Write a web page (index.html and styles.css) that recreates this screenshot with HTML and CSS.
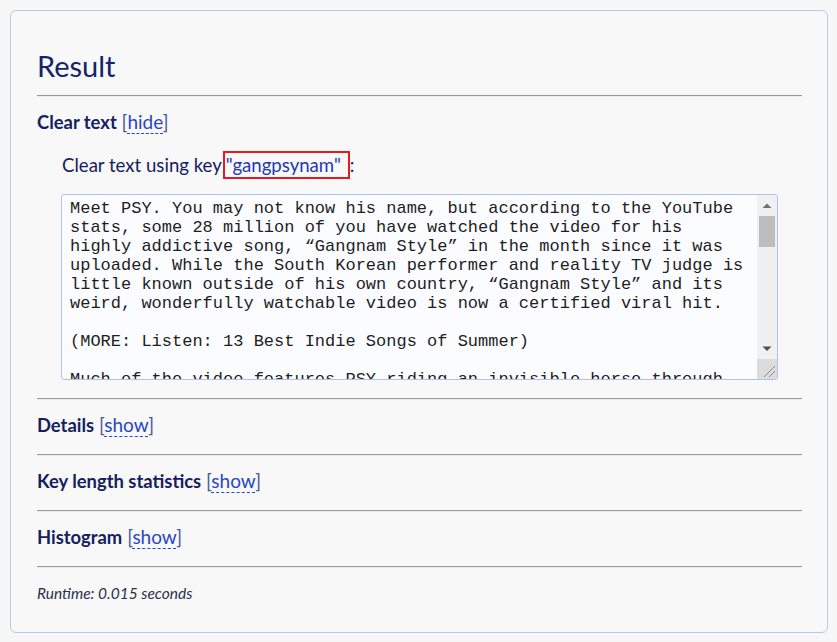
FILE: index.html
```html
<!DOCTYPE html>
<html lang="en">
<head>
<meta charset="utf-8">
<title>Result</title>
<link rel="stylesheet" href="styles.css">
</head>
<body>
<div class="panel">
  <h2 class="title">Result</h2>
  <hr class="rule">
  <div class="section">
    <div class="sec-head"><span class="sec-name">Clear text</span> <span class="toggle">[<a class="tlink">hide</a>]</span></div>
    <div class="sec-body">
      <p class="key-line">Clear text using key<span class="key">"gangpsynam"</span>:</p>
      <div class="ta-wrap">
        <textarea class="output" readonly>Meet PSY. You may not know his name, but according to the YouTube stats, some 28 million of you have watched the video for his highly addictive song, “Gangnam Style” in the month since it was uploaded. While the South Korean performer and reality TV judge is little known outside of his own country, “Gangnam Style” and its weird, wonderfully watchable video is now a certified viral hit.

(MORE: Listen: 13 Best Indie Songs of Summer)

Much of the video features PSY riding an invisible horse through the streets of Seoul, dancing in a sauna, on a tour bus and in a stable, while a parade of odd characters drifts in and out of the frame. The song’s title refers to Gangnam, an affluent district of Seoul known for its expensive boutiques, wealthy residents and fashionable nightlife.

PSY has said that the song pokes fun at people who try too hard to look like they belong in Gangnam. The dance, which mimics riding a horse, has already inspired countless parodies and fan videos, from flash mobs in city squares to students in school hallways.

(MORE: The 10 Most Viral Videos of the Year)

The video has been shared by celebrities on Twitter, and music fans around the world have been learning the choreography step by step. Not bad for a singer who has been making records in Korea for more than a decade, but who until this summer was almost unknown to audiences abroad.</textarea>
        <div class="fake-scroll" aria-hidden="true">
          <div class="sb-btn"><svg width="20" height="20" viewBox="0 0 20 20"><path d="M5.5 13h9L10 8.5z" fill="#707070"/></svg></div>
          <div class="sb-track"><div class="sb-thumb"></div></div>
          <div class="sb-btn"><svg width="20" height="20" viewBox="0 0 20 20"><path d="M5.5 7.5h9L10 12z" fill="#505050"/></svg></div>
          <div class="sb-corner"><svg width="20" height="20" viewBox="0 0 20 20"><path d="M18 7L7 18M18 12L12 18" stroke="#8a8a8a" stroke-width="1"/></svg></div>
        </div>
      </div>
    </div>
  </div>
  <hr class="rule">
  <div class="section">
    <div class="sec-head"><span class="sec-name">Details</span> <span class="toggle">[<a class="tlink">show</a>]</span></div>
  </div>
  <hr class="rule">
  <div class="section">
    <div class="sec-head"><span class="sec-name">Key length statistics</span> <span class="toggle">[<a class="tlink">show</a>]</span></div>
  </div>
  <hr class="rule">
  <div class="section">
    <div class="sec-head"><span class="sec-name">Histogram</span> <span class="toggle">[<a class="tlink">show</a>]</span></div>
  </div>
  <hr class="rule">
  <p class="runtime">Runtime: 0.015 seconds</p>
</div>
</body>
</html>
```
FILE: styles.css
```css
html, body {
  margin: 0;
  padding: 0;
  background: #f7f7f8;
}
body {
  font-family: Lato, "Open Sans", sans-serif;
  color: #14215e;
  padding: 10px 9px 9px 10px;
}
.panel {
  border: 1px solid #b8c8ef;
  border-radius: 6px;
  background: #f8f8f9;
  padding: 0 25px 0 26px;
  height: 623px;
  box-sizing: border-box;
}
.title {
  margin: 0;
  padding-top: 37px;
  font-size: 29px;
  font-weight: 400;
  line-height: 36px;
  height: 47px;
  color: #15236a;
}
.rule {
  margin: 0;
  border: 0;
  border-top: 1px solid #9a9a9a;
  border-bottom: 1px solid #ececec;
  height: 0;
}
.sec-head {
  padding: 13px 0 17px;
  line-height: 24px;
  font-size: 19px;
}
.sec-name {
  font-weight: 700;
  font-size: 18.4px;
  color: #14215e;
}
.toggle {
  color: #4a5aa0;
}
.tlink {
  color: #2846c8;
  border-bottom: 1px dashed #2846c8;
  cursor: pointer;
}
.section:first-of-type .sec-head {
  padding-bottom: 0;
}
.sec-body {
  padding: 18px 0 18px 24px;
}
.key-line {
  margin: 0 0 15px 1px;
  font-size: 18.6px;
  line-height: 27px;
  color: #14215e;
}
.key {
  color: #2238b4;
  border: 2px solid #e01b24;
  margin-left: 1px;
  padding: 1px 7px 1px 1px;
}
.ta-wrap {
  position: relative;
  width: 717px;
  height: 186px;
}
.output {
  display: block;
  box-sizing: border-box;
  width: 717px;
  height: 186px;
  margin: 0;
  padding: 4px 28px 4px 8px;
  border: 1px solid #aec2ef;
  border-radius: 3px;
  background: #fbfcff;
  font-family: "Liberation Mono", monospace;
  font-size: 17px;
  line-height: 19px;
  color: #1e1e1e;
  resize: none;
  overflow: hidden;
}
.fake-scroll {
  position: absolute;
  top: 1px;
  right: 1px;
  bottom: 1px;
  width: 20px;
  display: flex;
  flex-direction: column;
  background: #f0f0f0;
  border-radius: 0 2px 2px 0;
}
.sb-btn {
  height: 20px;
  flex: none;
}
.sb-btn svg, .sb-corner svg {
  display: block;
}
.sb-track {
  flex: 1;
  padding: 1px 2px;
}
.sb-thumb {
  height: 31px;
  background: #bdbdbd;
}
.sb-corner {
  height: 20px;
  flex: none;
  background: #dcdcdc;
}
.runtime {
  margin: 0;
  padding-top: 15px;
  font-style: italic;
  font-size: 15.5px;
  line-height: 20px;
  color: #2a2f4a;
}
```
